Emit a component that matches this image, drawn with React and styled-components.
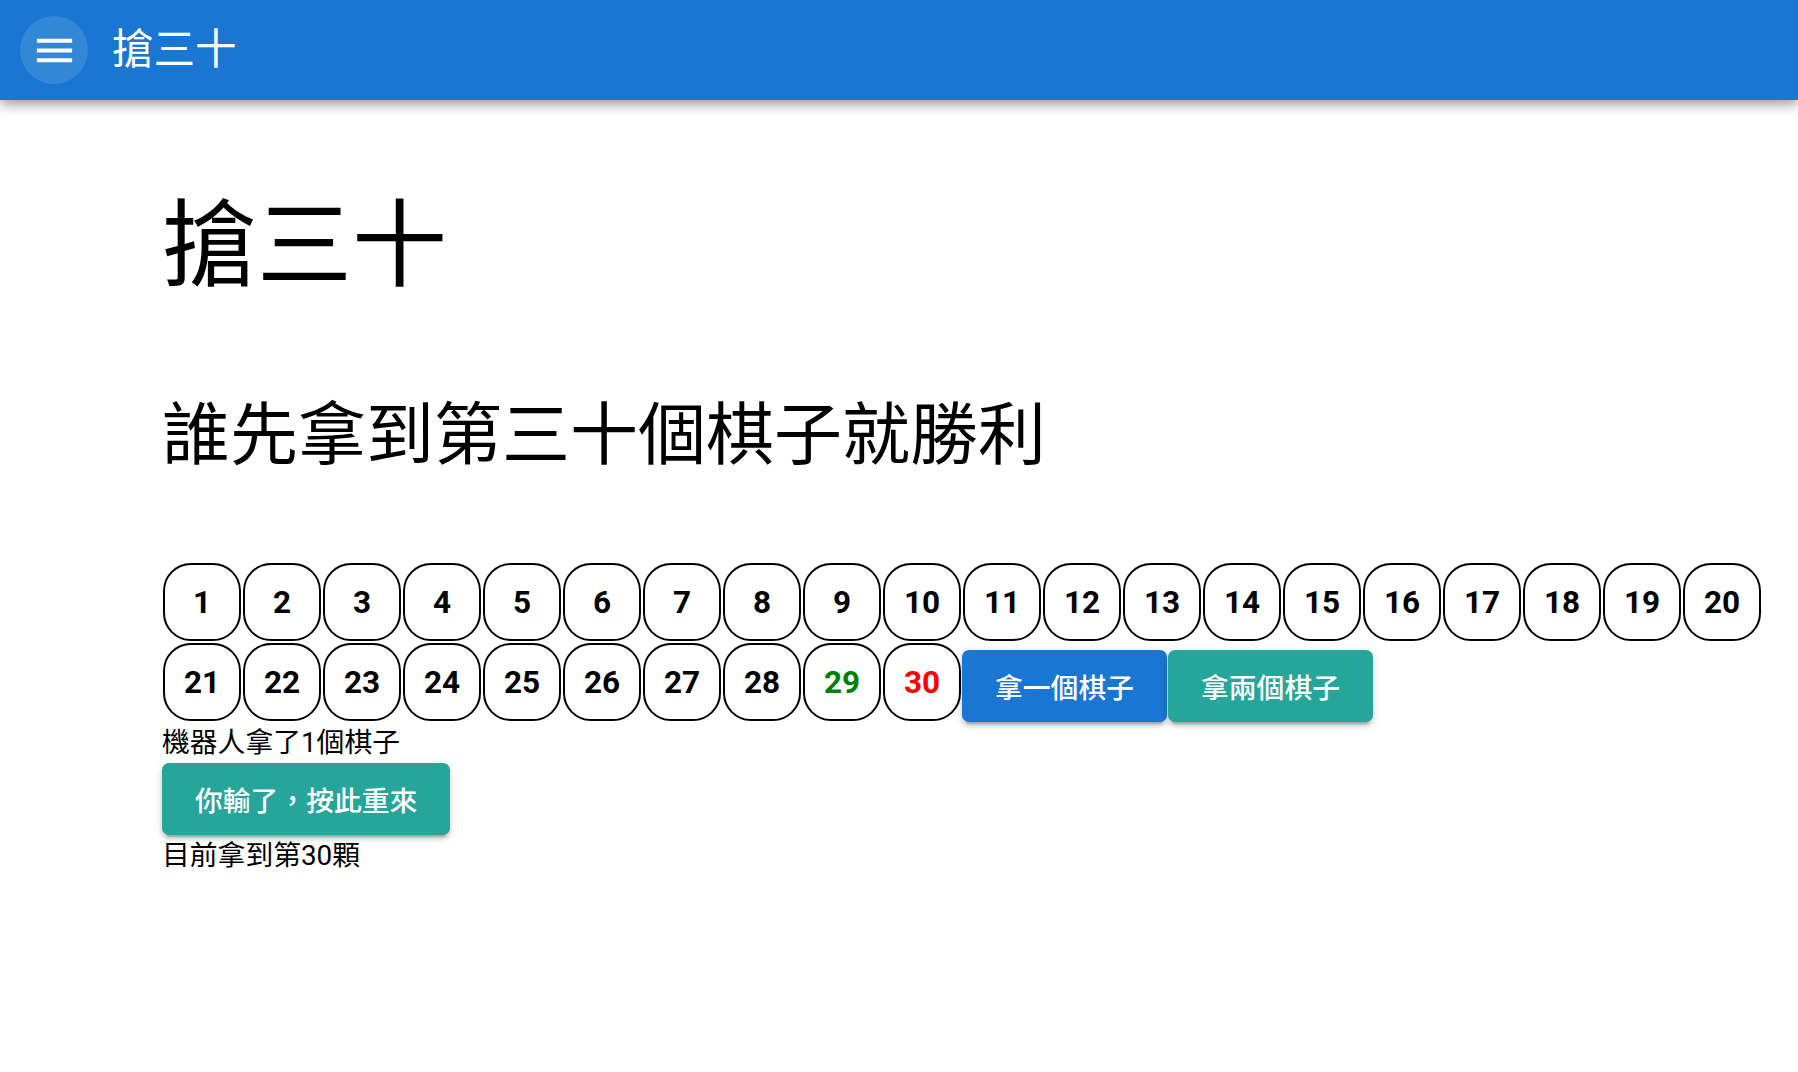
import React, { useState } from "react";
import styled, { createGlobalStyle } from "styled-components";

const GlobalStyle = createGlobalStyle`
  html, body {
    margin: 0;
    padding: 0;
    background: #fff;
    font-family: Roboto, "Noto Sans CJK TC", "Noto Sans", sans-serif;
    color: #000;
  }
`;

const AppBar = styled.header`
  height: 100px;
  background-color: #1976d2;
  display: flex;
  align-items: center;
  padding: 0 20px;
  box-sizing: border-box;
  box-shadow: 0 4px 8px -2px rgba(0, 0, 0, 0.2), 0 8px 10px 0 rgba(0, 0, 0, 0.14), 0 2px 18px 0 rgba(0, 0, 0, 0.12);
  position: relative;
  z-index: 1;
`;

const MenuButton = styled.button`
  width: 68px;
  height: 68px;
  border-radius: 50%;
  border: 0;
  padding: 0;
  background: rgba(255, 255, 255, 0.12);
  display: flex;
  align-items: center;
  justify-content: center;
  cursor: pointer;
  svg {
    width: 47px;
    height: 47px;
    fill: #fff;
  }
`;

const BarTitle = styled.div`
  color: #fff;
  font-size: 41.5px;
  font-weight: 400;
  margin-left: 24px;
  line-height: 1;
`;

const Main = styled.main`
  padding: 0 24px 0 162px;
`;

const Heading = styled.h1`
  font-size: 95px;
  font-weight: 400;
  line-height: 1;
  margin: 99px 0 0;
`;

const SubHeading = styled.h2`
  font-size: 68px;
  font-weight: 400;
  line-height: 1;
  margin: 108px 0 0;
`;

const Board = styled.div`
  display: flex;
  flex-wrap: wrap;
  align-items: flex-end;
  margin-top: 92px;
`;

const Stone = styled.div`
  width: 78px;
  height: 78px;
  margin: 1px;
  box-sizing: border-box;
  border: 2px solid #000;
  border-radius: 28px;
  display: flex;
  align-items: center;
  justify-content: center;
  font-family: Roboto, sans-serif;
  font-weight: 700;
  font-size: 31.5px;
  color: ${props => props.tone || "#000"};
`;

const ActionButton = styled.button`
  height: 72px;
  padding: 0 33px;
  margin: 0 1px 0 0;
  border: 0;
  border-radius: 7px;
  background-color: ${props => props.color};
  color: #fff;
  font-family: Roboto, "Noto Sans CJK TC", sans-serif;
  font-size: 27.8px;
  font-weight: 500;
  cursor: pointer;
  box-shadow: 0 6px 2px -4px rgba(0, 0, 0, 0.2), 0 4px 4px 0 rgba(0, 0, 0, 0.14), 0 2px 10px 0 rgba(0, 0, 0, 0.12);
`;

const Line = styled.div`
  font-size: 27.8px;
  line-height: 41px;
`;

function MenuIcon() {
  return (
    <svg viewBox="0 0 24 24">
      <path d="M3 18h18v-2H3v2zm0-5h18v-2H3v2zm0-7v2h18V6H3z" />
    </svg>
  );
}

const stones = Array.from({ length: 30 }, (_, i) => i + 1);

export default function App() {
  const [taken] = useState(30);

  function toneFor(n) {
    if (n === 29) return "#008000";
    if (n === 30) return "#ff0000";
    return "#000";
  }

  return (
    <>
      <GlobalStyle />
      <AppBar>
        <MenuButton aria-label="menu">
          <MenuIcon />
        </MenuButton>
        <BarTitle>搶三十</BarTitle>
      </AppBar>
      <Main>
        <Heading>搶三十</Heading>
        <SubHeading>誰先拿到第三十個棋子就勝利</SubHeading>
        <Board>
          {stones.map(n => (
            <Stone key={n} tone={toneFor(n)}>{n}</Stone>
          ))}
          <ActionButton color="#1976d2">拿一個棋子</ActionButton>
          <ActionButton color="#26a69a">拿兩個棋子</ActionButton>
        </Board>
        <Line>機器人拿了1個棋子</Line>
        <ActionButton color="#26a69a">你輸了，按此重來</ActionButton>
        <Line>目前拿到第{taken}顆</Line>
      </Main>
    </>
  );
}
